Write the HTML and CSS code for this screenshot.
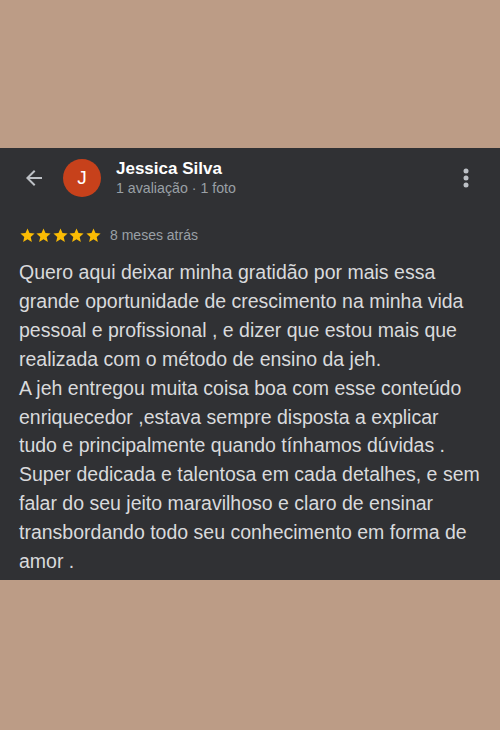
FILE: index.html
```html
<!DOCTYPE html>
<html lang="pt">
<head>
<meta charset="utf-8">
<link rel="stylesheet" href="styles.css">
</head>
<body>
<div class="page">
  <div class="panel">
    <div class="header">
      <svg class="back" width="24" height="24" viewBox="0 0 24 24"><path d="M20 11H7.83l5.59-5.59L12 4l-8 8 8 8 1.41-1.41L7.83 13H20v-2z" fill="#bdc1c6"/></svg>
      <div class="avatar">J</div>
      <div class="who">
        <div class="name">Jessica Silva</div>
        <div class="meta">1 avaliação · 1 foto</div>
      </div>
      <svg class="more" width="10" height="24" viewBox="0 0 10 24"><circle cx="5" cy="5" r="2.5" fill="#bdc1c6"/><circle cx="5" cy="12" r="2.5" fill="#bdc1c6"/><circle cx="5" cy="19" r="2.5" fill="#bdc1c6"/></svg>
    </div>
    <div class="rating">
      <div class="stars">
        <svg viewBox="0 0 24 24"><path d="M12 17.27L18.18 21l-1.64-7.03L22 9.24l-7.19-.61L12 2 9.19 8.63 2 9.24l5.46 4.73L5.82 21z" fill="#fbbc04"/></svg>
        <svg viewBox="0 0 24 24"><path d="M12 17.27L18.18 21l-1.64-7.03L22 9.24l-7.19-.61L12 2 9.19 8.63 2 9.24l5.46 4.73L5.82 21z" fill="#fbbc04"/></svg>
        <svg viewBox="0 0 24 24"><path d="M12 17.27L18.18 21l-1.64-7.03L22 9.24l-7.19-.61L12 2 9.19 8.63 2 9.24l5.46 4.73L5.82 21z" fill="#fbbc04"/></svg>
        <svg viewBox="0 0 24 24"><path d="M12 17.27L18.18 21l-1.64-7.03L22 9.24l-7.19-.61L12 2 9.19 8.63 2 9.24l5.46 4.73L5.82 21z" fill="#fbbc04"/></svg>
        <svg viewBox="0 0 24 24"><path d="M12 17.27L18.18 21l-1.64-7.03L22 9.24l-7.19-.61L12 2 9.19 8.63 2 9.24l5.46 4.73L5.82 21z" fill="#fbbc04"/></svg>
      </div>
      <span class="when">8 meses atrás</span>
    </div>
    <p class="review">Quero aqui deixar minha gratidão por mais essa<br>grande oportunidade de crescimento na minha vida<br>pessoal e profissional , e dizer que estou mais que<br>realizada com o método de ensino da jeh.<br>A jeh entregou muita coisa boa com esse conteúdo<br>enriquecedor ,estava sempre disposta a explicar<br>tudo e principalmente quando tínhamos dúvidas .<br>Super dedicada e talentosa em cada detalhes, e sem<br>falar do seu jeito maravilhoso e claro de ensinar<br>transbordando todo seu conhecimento em forma de<br>amor .</p>
  </div>
</div>
</body>
</html>
```
FILE: styles.css
```css
html, body {
  margin: 0;
  padding: 0;
  background: #bc9c86;
}
body {
  font-family: "Liberation Sans", Arial, sans-serif;
  width: 500px;
  height: 730px;
}
.page {
  padding-top: 148px;
}
.panel {
  background: #303134;
  height: 432px;
  box-sizing: border-box;
  padding: 0 10px 0 19px;
  overflow: hidden;
}
.header {
  display: flex;
  align-items: center;
  height: 58px;
  padding-top: 1px;
}
.back {
  margin-left: 3px;
  flex: none;
}
.avatar {
  width: 38px;
  height: 38px;
  border-radius: 50%;
  background: #c7411b;
  color: #fff;
  font-size: 19px;
  display: flex;
  align-items: center;
  justify-content: center;
  margin-left: 17px;
  flex: none;
}
.who {
  margin-left: 15px;
  flex: 1;
}
.name {
  color: #ffffff;
  font-weight: bold;
  font-size: 17px;
  line-height: 20px;
}
.meta {
  color: #9aa0a6;
  font-size: 14.2px;
  line-height: 18px;
}
.more {
  flex: none;
  margin-right: 19px;
}
.rating {
  display: flex;
  align-items: center;
  margin-top: 18px;
  height: 20px;
}
.stars {
  display: flex;
}
.stars svg {
  width: 17px;
  height: 17px;
  margin-right: -0.6px;
}
.when {
  color: #9aa0a6;
  font-size: 14px;
  margin-left: 9px;
}
.review {
  margin: 13px 0 0 0;
  color: #d9dadc;
  font-size: 19.5px;
  line-height: 28.9px;
  white-space: nowrap;
}
```
